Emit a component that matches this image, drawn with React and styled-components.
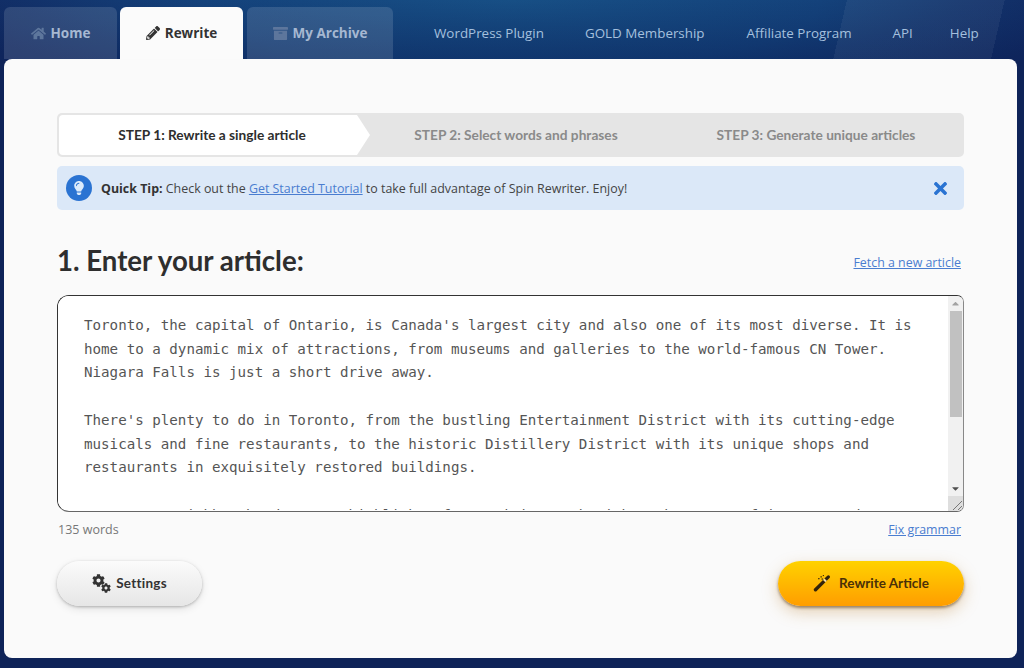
import React from "react";
import styled, { createGlobalStyle } from "styled-components";
import { FaHome, FaPencilAlt, FaArchive, FaTimes, FaCog, FaLightbulb, FaCaretUp, FaCaretDown } from "react-icons/fa";

const Global = createGlobalStyle`
  html, body { margin: 0; padding: 0; }
  body { font-family: "Open Sans", sans-serif; background: #0e2358; }
  * { box-sizing: border-box; }
`;

const Page = styled.div`
  width: 1024px;
  height: 668px;
  overflow: hidden;
  display: flex;
  flex-direction: column;
  padding: 7px 7px 10px 4px;
  background:
    linear-gradient(103deg, transparent 0 81.6%, rgba(255,255,255,.05) 81.6% 96.8%, transparent 96.8%) 0 0 / 100% 60px no-repeat,
    linear-gradient(180deg, rgba(8,26,80,0) 0, rgba(8,26,80,.35) 60px) 0 0 / 100% 60px no-repeat,
    radial-gradient(ellipse 560px 130px at 50% 0, #174f85 0, #14427b 55%, #112a62 100%) 0 0 / 100% 60px no-repeat,
    #0e2358;
`;

const Nav = styled.nav`
  display: flex;
  height: 52px;
  flex: none;
`;

const Tab = styled.a`
  display: flex;
  align-items: center;
  justify-content: center;
  gap: 5px;
  width: ${(p) => p.$w}px;
  margin-right: ${(p) => p.$mr}px;
  border-radius: 6px 6px 0 0;
  font-size: 13.5px;
  font-weight: 700;
  color: ${(p) => (p.$active ? "#333" : "#a6b8d2")};
  background: ${(p) => (p.$active ? "#fbfbfb" : "rgba(255,255,255,.13)")};
  svg { font-size: ${(p) => (p.$active ? 14 : 15)}px; color: ${(p) => (p.$active ? "#333" : "#5d769c")}; }
`;

const NavLinks = styled.div`
  display: flex;
  align-items: center;
  margin-left: 41px;
`;

const NavLink = styled.a`
  font-size: 13.4px;
  color: #a5c0de;
  margin-right: ${(p) => p.$mr}px;
  white-space: nowrap;
`;

const Panel = styled.main`
  flex: 1;
  background: #fafafa;
  border-radius: 8px;
  padding: 54px 53px 0 53px;
  display: flex;
  flex-direction: column;
`;

const Steps = styled.div`
  display: flex;
  height: 44px;
  background: #e5e5e5;
  border-radius: 5px;
  overflow: hidden;
`;

const Step = styled.div`
  display: flex;
  align-items: center;
  justify-content: center;
  font-family: Lato, sans-serif;
  font-weight: 700;
  font-size: 13.7px;
  color: ${(p) => (p.$active ? "#2e2e2e" : "#8a8a8a")};
  flex: 0 0 ${(p) => p.$w}px;
  padding: 0 ${(p) => p.$shift}px 1px 0;
  ${(p) =>
    p.$active &&
    `
    background: #fff;
    margin: 2px 0 2px 2px;
    border-radius: 4px 0 0 4px;
    clip-path: polygon(0 0, calc(100% - 13px) 0, 100% 50%, calc(100% - 13px) 100%, 0 100%);
  `}
`;

const Tip = styled.div`
  display: flex;
  align-items: center;
  height: 44px;
  margin-top: 9px;
  padding: 0 14px 0 9px;
  background: #dbe8f8;
  border-radius: 5px;
  font-size: 12.43px;
  color: #444;
`;

const TipIcon = styled.span`
  width: 26px;
  height: 26px;
  flex: none;
  border-radius: 50%;
  background: #2a73d2;
  color: #dcebfb;
  display: flex;
  align-items: center;
  justify-content: center;
  font-size: 14px;
  margin-right: 9px;
`;

const TipText = styled.span`
  flex: 1;
  b { color: #333; }
`;

const Link = styled.a`
  color: #4a7dd0;
  text-decoration: underline;
`;

const Close = styled.span`
  color: #2a73d2;
  font-size: 19px;
  display: flex;
`;

const HeadRow = styled.div`
  display: flex;
  align-items: center;
  justify-content: space-between;
  margin-top: 33px;
  height: 38px;
  padding-right: 3px;
`;

const Title = styled.h1`
  margin: -3px 0 0;
  font-family: Lato, sans-serif;
  font-size: 27.6px;
  font-weight: 700;
  color: #2e2e2e;
`;

const SmallLink = styled(Link)`
  font-size: 12.4px;
`;

const EditorFrame = styled.div`
  display: flex;
  height: 217px;
  margin-top: 14px;
  background: #fff;
  border: 1px solid #666;
  border-top-color: #333;
  border-left-color: #333;
  border-right-color: #888;
  border-radius: 12px 7px 7px 12px;
  overflow: hidden;
`;

const Editor = styled.textarea`
  flex: 1;
  height: 214px;
  padding: 18px 17px 0 26px;
  font-family: "DejaVu Sans Mono", monospace;
  font-size: 14.18px;
  line-height: 23.7px;
  color: #555;
  background: #fff;
  border: none;
  outline: none;
  overflow: hidden;
  resize: none;
`;

const ScrollBar = styled.div`
  flex: 0 0 15px;
  display: flex;
  flex-direction: column;
  background: #f1f1f1;
`;

const ScrollButton = styled.div`
  flex: 0 0 15px;
  display: flex;
  align-items: center;
  justify-content: center;
  font-size: 11px;
  color: ${(p) => p.$color};
`;

const Thumb = styled.div`
  flex: 0 0 106px;
  margin: 0 1px 0 2px;
  background: #c1c1c1;
`;

const Track = styled.div`
  flex: 1;
`;

const Corner = styled.div`
  flex: 0 0 15px;
  background: #dedede;
  display: flex;
  align-items: flex-end;
  justify-content: flex-end;
  color: #777;
`;

const MetaRow = styled.div`
  display: flex;
  justify-content: space-between;
  align-items: center;
  height: 18px;
  margin-top: 8px;
  padding: 0 3px 0 1px;
  font-size: 12.5px;
  color: #777;
`;

const Actions = styled.div`
  display: flex;
  justify-content: space-between;
  margin-top: 23px;
`;

const Button = styled.button`
  display: flex;
  align-items: center;
  justify-content: center;
  gap: ${(p) => (p.$primary ? 8 : 5)}px;
  height: 45px;
  width: ${(p) => p.$w}px;
  padding: 0 0 2px;
  border: none;
  border-radius: 23px;
  font-family: Lato, sans-serif;
  font-weight: 700;
  font-size: 13.5px;
  letter-spacing: ${(p) => (p.$primary ? 0 : 0.25)}px;
  color: ${(p) => (p.$primary ? "#4a3008" : "#333")};
  background: ${(p) =>
    p.$primary
      ? "linear-gradient(180deg, #ffd200 0, #ff9d00 100%)"
      : "linear-gradient(180deg, #fbfbfb 0, #e6e6e6 100%)"};
  box-shadow: ${(p) =>
    p.$primary
      ? "0 2px 3px rgba(90,60,20,.55), 0 6px 16px rgba(190,130,50,.35)"
      : "0 1px 3px rgba(0,0,0,.25), 0 3px 8px rgba(0,0,0,.1)"};
`;

const Gears = styled.span`
  display: inline-flex;
  width: 19px;
  height: 19px;
  align-items: flex-start;
  color: #333;
  margin-top: 1px;
  svg:first-child { font-size: 13px; flex: none; }
  svg:last-child { font-size: 10px; flex: none; margin-left: -4px; align-self: flex-end; }
`;

const article = `Toronto, the capital of Ontario, is Canada's largest city and also one of its most diverse. It is home to a dynamic mix of attractions, from museums and galleries to the world-famous CN Tower. Niagara Falls is just a short drive away.

There's plenty to do in Toronto, from the bustling Entertainment District with its cutting-edge musicals and fine restaurants, to the historic Distillery District with its unique shops and restaurants in exquisitely restored buildings.

Toronto's neighbourhoods are a highlight of any visit, each with a character of its own and something new to discover on every corner, from street markets to quiet cafes and small independent shops.

Visitors can explore the waterfront, catch a game, or take a ferry to the Toronto Islands, where quiet beaches and wide open views of the skyline are waiting for them.`;

function WandIcon() {
  return (
    <svg width="18" height="18" viewBox="0 0 18 18" aria-hidden="true">
      <path d="M2.5 15.8 L11.2 7.1" stroke="#33230a" strokeWidth="3.4" strokeLinecap="round" />
      <path d="M12.6 5.7 L15.4 2.9" stroke="#33230a" strokeWidth="3.2" strokeLinecap="round" />
      <path d="M11.2 7.1 L12.6 5.7" stroke="#f7e3a6" strokeWidth="3.2" />
      <g fill="#33230a">
        <rect x="7.5" y="2.2" width="1.3" height="1.3" />
        <rect x="5.2" y="4" width="1.3" height="1.3" />
        <rect x="9.8" y="1" width="1.1" height="1.1" />
        <rect x="8.6" y="4.4" width="1.3" height="1.3" />
      </g>
    </svg>
  );
}

function GripIcon() {
  return (
    <svg width="12" height="12" viewBox="0 0 12 12" aria-hidden="true">
      <path d="M2 11 L11 2 M7 11 L11 7" stroke="currentColor" strokeWidth="1" fill="none" />
    </svg>
  );
}

export default function App() {
  return (
    <Page>
      <Global />
      <Nav>
        <Tab $w={113} $mr={3}><FaHome />Home</Tab>
        <Tab $w={123} $mr={4} $active><FaPencilAlt />Rewrite</Tab>
        <Tab $w={146} $mr={0}><FaArchive />My Archive</Tab>
        <NavLinks>
          <NavLink $mr={41}>WordPress Plugin</NavLink>
          <NavLink $mr={42}>GOLD Membership</NavLink>
          <NavLink $mr={41}>Affiliate Program</NavLink>
          <NavLink $mr={37}>API</NavLink>
          <NavLink $mr={0}>Help</NavLink>
        </NavLinks>
      </Nav>
      <Panel>
        <Steps>
          <Step $active $w={311} $shift={5}>STEP 1: Rewrite a single article</Step>
          <Step $w={298} $shift={6}>STEP 2: Select words and phrases</Step>
          <Step $w={296} $shift={0}>STEP 3: Generate unique articles</Step>
        </Steps>
        <Tip>
          <TipIcon><FaLightbulb /></TipIcon>
          <TipText>
            <b>Quick Tip:</b> Check out the <Link>Get Started Tutorial</Link> to take full advantage of Spin Rewriter. Enjoy!
          </TipText>
          <Close><FaTimes /></Close>
        </Tip>
        <HeadRow>
          <Title>1. Enter your article:</Title>
          <SmallLink>Fetch a new article</SmallLink>
        </HeadRow>
        <EditorFrame>
          <Editor readOnly defaultValue={article} spellCheck={false} />
          <ScrollBar>
            <ScrollButton $color="#a3a3a3"><FaCaretUp /></ScrollButton>
            <Thumb />
            <Track />
            <ScrollButton $color="#505050"><FaCaretDown /></ScrollButton>
            <Corner><GripIcon /></Corner>
          </ScrollBar>
        </EditorFrame>
        <MetaRow>
          <span>135 words</span>
          <SmallLink>Fix grammar</SmallLink>
        </MetaRow>
        <Actions>
          <Button $w={145}>
            <Gears><FaCog /><FaCog /></Gears>
            Settings
          </Button>
          <Button $w={186} $primary>
            <WandIcon />
            Rewrite Article
          </Button>
        </Actions>
      </Panel>
    </Page>
  );
}
